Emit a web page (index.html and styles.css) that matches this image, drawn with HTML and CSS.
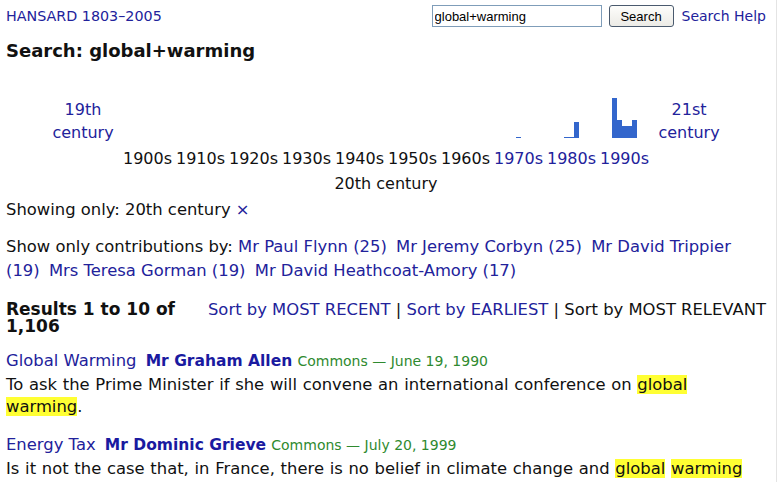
FILE: index.html
```html
<!DOCTYPE html>
<html lang="en">
<head>
<meta charset="utf-8">
<title>Hansard search: global+warming</title>
<link rel="stylesheet" href="styles.css">
</head>
<body>
<div class="page">
  <header class="top">
    <a class="brand" href="#">HANSARD 1803–2005</a>
    <form class="search">
      <input class="q" type="text" value="global+warming">
      <button class="btn" type="button">Search</button>
      <a class="help" href="#">Search Help</a>
    </form>
  </header>

  <h1 class="title">Search: global+warming</h1>

  <div class="timeline">
    <a class="century c19" href="#">19th<br>century</a>
    <div class="bars k1"></div>
    <div class="bars k2"></div>
    <div class="bars k3"></div>
    <div class="bars k4"></div>
    <div class="bars k5"></div>
    <div class="bars k6"></div>
    <div class="bars k7"></div>
    <div class="bars k8"><svg width="25" height="40" viewBox="0 0 25 40"><rect x="10" y="39" width="5" height="1"/></svg></div>
    <div class="bars k9"><svg width="25" height="40" viewBox="0 0 25 40"><rect x="5" y="39" width="10" height="1"/><rect x="15" y="24" width="5" height="16"/></svg></div>
    <div class="bars k10"><svg width="25" height="40" viewBox="0 0 25 40"><rect x="0" y="0" width="5" height="40"/><rect x="5" y="22" width="5" height="18"/><rect x="10" y="28" width="10" height="12"/><rect x="20" y="22" width="5" height="18"/></svg></div>
    <a class="century c21" href="#">21st<br>century</a>

    <span class="dec k1">1900s</span>
    <span class="dec k2">1910s</span>
    <span class="dec k3">1920s</span>
    <span class="dec k4">1930s</span>
    <span class="dec k5">1940s</span>
    <span class="dec k6">1950s</span>
    <span class="dec k7">1960s</span>
    <a class="dec k8" href="#">1970s</a>
    <a class="dec k9" href="#">1980s</a>
    <a class="dec k10" href="#">1990s</a>

    <div class="c20">20th century</div>
  </div>

  <p class="showing">Showing only: 20th century <a class="x" href="#">×</a></p>

  <p class="contrib"><span>Show only contributions by:</span> <a href="#">Mr Paul Flynn (25)</a> <a href="#">Mr Jeremy Corbyn (25)</a> <a href="#"><span>Mr David Trippier</span> <span>(19)</span></a> <a href="#">Mrs Teresa Gorman (19)</a> <a href="#">Mr David Heathcoat-Amory (17)</a></p>

  <div class="results-head">
    <h3 class="count">Results 1 to 10 of 1,106</h3>
    <div class="sort"><a href="#">Sort by MOST RECENT</a> | <a href="#">Sort by EARLIEST</a> | Sort by MOST RELEVANT</div>
  </div>

  <div class="results">
    <div class="result">
      <div class="rtitle"><a class="debate" href="#">Global Warming</a> <a class="member" href="#">Mr Graham Allen</a> <span class="meta">Commons — June 19, 1990</span></div>
      <p class="excerpt">To ask the Prime Minister if she will convene an international conference on <mark>global</mark> <mark>warming</mark>.</p>
    </div>
    <div class="result">
      <div class="rtitle"><a class="debate" href="#">Energy Tax</a> <a class="member" href="#">Mr Dominic Grieve</a> <span class="meta">Commons — July 20, 1999</span></div>
      <p class="excerpt">Is it not the case that, in France, there is no belief in climate change and <mark>global</mark> <mark>warming</mark></p>
    </div>
  </div>
</div>
</body>
</html>
```

FILE: styles.css
```css
html, body {
  margin: 0;
  padding: 0;
  background: #fff;
}

body {
  font-family: Verdana, "DejaVu Sans", sans-serif;
  font-size: 16.4px;
  color: #111;
  overflow: hidden;
}

a {
  color: #22229b;
  text-decoration: none;
}

.page {
  width: 777px;
  height: 482px;
  box-sizing: border-box;
  border-right: 1px solid #e4e4e4;
  padding: 5px 10px 0 6px;
  overflow: hidden;
}

/* header */
.top {
  display: flex;
  justify-content: space-between;
  align-items: center;
  height: 22px;
}

.brand {
  font-size: 14.3px;
  line-height: 22px;
}

.search {
  display: flex;
  align-items: center;
  margin: 0;
}

.q {
  width: 170px;
  height: 22px;
  box-sizing: border-box;
  border: 1px solid #7f9db9;
  padding: 0 2px;
  font-family: "Liberation Sans", Arial, sans-serif;
  font-size: 13px;
  color: #000;
  margin: 0;
}

.btn {
  margin: 0 0 0 7px;
  width: 65px;
  height: 22px;
  box-sizing: border-box;
  border: 1px solid #4a5a6e;
  border-radius: 3px;
  background: linear-gradient(#fdfdfb, #ecebe6);
  font-family: "Liberation Sans", Arial, sans-serif;
  font-size: 13px;
  color: #000;
  padding: 0;
}

.help {
  margin-left: 8px;
  font-size: 14px;
}

/* title */
.title {
  margin: 13px 0 0;
  font-size: 18px;
  line-height: 22px;
  font-weight: bold;
  color: #111;
}

/* timeline */
.timeline {
  margin-top: 34px;
  display: grid;
  grid-template-columns: 72px repeat(10, 49px) 72px;
  grid-template-rows: 49px 26px 26px;
  column-gap: 4px;
  justify-content: center;
  font-size: 16px;
}

.century {
  grid-row: 1;
  align-self: center;
  text-align: center;
  line-height: 23px;
}

.c19 { grid-column: 1; }
.c21 { grid-column: 12; }

.k1 { grid-column: 2; }
.k2 { grid-column: 3; }
.k3 { grid-column: 4; }
.k4 { grid-column: 5; }
.k5 { grid-column: 6; }
.k6 { grid-column: 7; }
.k7 { grid-column: 8; }
.k8 { grid-column: 9; }
.k9 { grid-column: 10; }
.k10 { grid-column: 11; }

.bars {
  grid-row: 1;
  align-self: end;
  display: flex;
  justify-content: center;
  padding-bottom: 7px;
}

.bars svg {
  display: block;
  fill: #3366cc;
}

.dec {
  grid-row: 2;
  text-align: center;
  line-height: 28px;
  white-space: nowrap;
}

.c20 {
  grid-row: 3;
  grid-column: 2 / 12;
  text-align: center;
  line-height: 26px;
}

/* filters */
.showing {
  margin: 3px 0 0;
  line-height: 20px;
}

.contrib {
  margin: 15px 0 0;
  line-height: 24px;
}

.contrib a {
  margin-right: 4px;
}

/* results header */
.results-head {
  margin-top: 18px;
  display: flex;
  align-items: flex-start;
}

.count {
  flex: 0 0 190px;
  margin: 0;
  font-size: 17px;
  line-height: 17px;
  font-weight: bold;
}

.sort {
  flex: 1;
  text-align: right;
  line-height: 17px;
  white-space: nowrap;
}

/* results */
.results {
  margin: 15px 11px 0 0;
}

.result + .result {
  margin-top: 16px;
}

.rtitle {
  line-height: 22px;
  white-space: nowrap;
}

.debate {
  margin-right: 4px;
}

.member {
  font-weight: bold;
  font-size: 15.5px;
  color: #1a1aa0;
}

.meta {
  font-size: 14px;
  color: #2f8a2f;
}

.excerpt {
  margin: 2px 0 0;
  line-height: 22px;
  word-spacing: 0.5px;
}

mark {
  background: #ffff33;
  color: inherit;
}
```
